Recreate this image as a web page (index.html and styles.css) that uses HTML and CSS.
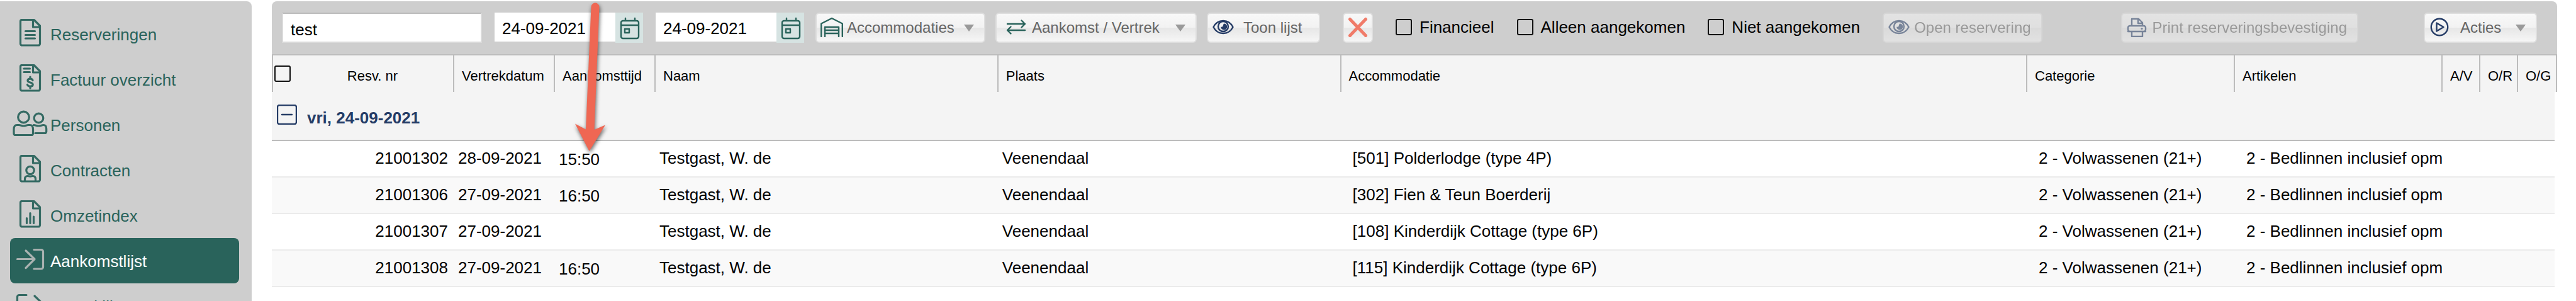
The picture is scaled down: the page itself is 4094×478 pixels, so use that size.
FILE: index.html
```html
<!DOCTYPE html>
<html lang="nl">
<head>
<meta charset="utf-8">
<title>Aankomstlijst</title>
<meta name="viewport" content="width=device-width, initial-scale=1">
<link rel="stylesheet" href="styles.css">
</head>
<body>
<svg class="defs" aria-hidden="true">
  <symbol id="file" viewBox="0 0 56 44">
    <path d="M14 1.500H34L43.500 11V39.500a2.500 2.500 0 0 1-2.500 2.500H15a2.500 2.500 0 0 1-2.500-2.500V4a2.500 2.500 0 0 1 2.500-2.500zM32.500 2V13H43"/>
  </symbol>
  <symbol id="eye" viewBox="0 0 36 32">
    <path d="M2.500 16C6 9 12 6 18 6s12 3 15.500 10C30 23 24 26 18 26S6 23 2.500 16z"/>
    <circle cx="18" cy="15" r="8"/>
    <path class="solid" d="M19 10.500a5 5 0 1 1-4.800 5c1.800.8 4-.2 3.600-2.500z"/>
  </symbol>
  <symbol id="calendar" viewBox="0 0 44 48">
    <path d="M9 16a3 3 0 0 1 3-3H34a3 3 0 0 1 3 3V38a3 3 0 0 1-3 3H12a3 3 0 0 1-3-3zM9 20H37M16 9v4M31 9v4M15 26h7v6h-7z"/>
  </symbol>
</svg>

<div class="app">
  <nav class="sidebar" aria-label="Hoofdmenu">
    <a class="nav-item" href="#reserveringen">
      <svg class="nav-icon" viewBox="0 0 56 44"><use href="#file"/><path d="M20.500 19.500H35.500M20.500 25.500H35.500M20.500 31H35.500"/></svg>
      <span>Reserveringen</span>
    </a>
    <a class="nav-item" href="#factuur">
      <svg class="nav-icon" viewBox="0 0 56 44"><use href="#file"/><path d="M18 7H27.500M18 12.500H27.500"/><path d="M32 25.500c-.8-1.800-2.300-2.400-4-2.400-2.300 0-4 1.100-4 2.900 0 4 8.200 2 8.200 6.200 0 2-1.900 3-4.200 3-2.200 0-3.800-.9-4.500-2.700M28 20v3M28 35v3"/></svg>
      <span>Factuur overzicht</span>
    </a>
    <a class="nav-item" href="#personen">
      <svg class="nav-icon" viewBox="0 0 56 44"><circle cx="17.500" cy="12" r="8.800"/><circle cx="41.500" cy="13.500" r="7.300"/><path d="M7 24.500h3c3 0 4 1.500 7.500 1.500s4.500-1.500 7.500-1.500h2.500c4 0 5 3.500 5 7V38a2.500 2.500 0 0 1-2.500 2.500H4.500A2.500 2.500 0 0 1 2 38V31.500c0-3.500 1-7 5-7zM33.500 24.500c3 0 4 1.500 8 1.500s4.500-1.500 7.500-1.500c3.500 0 4.700 3 4.700 6V35a2.500 2.500 0 0 1-2.500 2.500H36"/></svg>
      <span>Personen</span>
    </a>
    <a class="nav-item" href="#contracten">
      <svg class="nav-icon" viewBox="0 0 56 44"><use href="#file"/><circle cx="28" cy="24.500" r="6.200"/><path d="M19.500 41V38.500c0-3 1.500-5 4.500-5 1.500 0 2 .7 4 .7s2.500-.7 4-.7c3 0 4.500 2 4.500 5V41"/></svg>
      <span>Contracten</span>
    </a>
    <a class="nav-item" href="#omzetindex">
      <svg class="nav-icon" viewBox="0 0 56 44"><use href="#file"/><path d="M22.500 28.500v8M28 20.500v16M33.500 26v10.500"/></svg>
      <span>Omzetindex</span>
    </a>
    <a class="nav-item active" href="#aankomstlijst" aria-current="page">
      <svg class="nav-icon" viewBox="0 0 56 44"><path d="M7.500 21.500H35M21 8l14 13.500L21 35.500M34 6.500H45.500a3 3 0 0 1 3 3v24.500a3 3 0 0 1-3 3H34"/></svg>
      <span>Aankomstlijst</span>
    </a>
    <a class="nav-item" href="#vertreklijst">
      <svg class="nav-icon" viewBox="0 0 56 44"><path d="M22 6.500H10.500a3 3 0 0 0-3 3v24.500a3 3 0 0 0 3 3H22M20 21.500H49M35 8l14 13.500L35 35.500"/></svg>
      <span>Vertreklijst</span>
    </a>
  </nav>

  <main class="content">
    <form class="toolbar">
      <div class="fields">
        <input class="search" type="text" value="test" aria-label="Zoeken">
        <div class="date">
          <input type="text" value="24-09-2021" aria-label="Datum van">
          <button type="button" aria-label="Kies datum van"><svg viewBox="0 0 44 48"><use href="#calendar"/></svg></button>
        </div>
        <div class="date">
          <input type="text" value="24-09-2021" aria-label="Datum tot">
          <button type="button" aria-label="Kies datum tot"><svg viewBox="0 0 44 48"><use href="#calendar"/></svg></button>
        </div>
      </div>
      <div class="actions">
        <button class="btn width-m" type="button">
          <svg class="green" viewBox="0 0 36 32"><path d="M1.200 31V10.500L18 2l16.800 8.500V31M7 31V16H29V31M7 21H29M7 26H29"/></svg>
          <span>Accommodaties</span><i class="caret"></i>
        </button>
        <button class="btn width-l indent" type="button">
          <svg class="green" viewBox="0 0 36 32"><path d="M3 11H31M25.500 5.500L31 11l-5.500 5.500M31 21H3M8.500 15.500L3 21l5.500 5.500"/></svg>
          <span>Aankomst / Vertrek</span><i class="caret"></i>
        </button>
        <button class="btn width-s wide-gap" type="button">
          <svg viewBox="0 0 36 32"><use href="#eye"/></svg>
          <span>Toon lijst</span>
        </button>
      </div>
      <button class="btn clear" type="button" aria-label="Wissen">
        <svg viewBox="0 0 36 32"><path d="M5.500 3.500L30.500 29.500M30.500 3.500L5.500 29.500"/></svg>
      </button>
      <div class="checks">
        <label><input type="checkbox">Financieel</label>
        <label><input type="checkbox">Alleen aangekomen</label>
        <label><input type="checkbox">Niet aangekomen</label>
      </div>
      <button class="btn" type="button" disabled>
        <svg viewBox="0 0 36 32"><use href="#eye"/></svg>
        <span>Open reservering</span>
      </button>
      <div class="trailing">
        <button class="btn" type="button" disabled>
          <svg viewBox="0 0 36 32"><path d="M9 14V3H20l6 6V14M19 3v7H26M8 23H6a3 3 0 0 1-3-3V17a3 3 0 0 1 3-3H28a3 3 0 0 1 3 3V20a3 3 0 0 1-3 3H26M3 23H31M9 23v8H26V23"/><circle class="solid" cx="25" cy="18.500" r="1.600"/></svg>
          <span>Print reserveringsbevestiging</span>
        </button>
        <button class="btn width-s wide-gap" type="button">
          <svg viewBox="0 0 36 32"><circle cx="17" cy="16" r="13.200"/><path d="M12.500 9.500V22.500L23.500 16z"/></svg>
          <span>Acties</span><i class="caret"></i>
        </button>
      </div>
    </form>

    <table class="grid">
      <colgroup>
        <col class="c-check"><col class="c-nr"><col class="c-date"><col class="c-date"><col class="c-name"><col class="c-name"><col><col class="c-cat"><col class="c-cat"><col class="c-flag"><col class="c-flag"><col class="c-flag"><col class="c-edge">
      </colgroup>
      <thead>
        <tr>
          <th class="check"><input type="checkbox" aria-label="Alles selecteren"></th>
          <th class="plain">Resv. nr</th>
          <th>Vertrekdatum</th><th>Aankomsttijd</th><th>Naam</th><th>Plaats</th><th>Accommodatie</th><th>Categorie</th><th>Artikelen</th><th>A/V</th><th>O/R</th><th class="last" colspan="2">O/G</th>
        </tr>
      </thead>
      <tbody>
        <tr class="group">
          <td colspan="12">
            <button type="button" aria-expanded="true">
              <svg viewBox="0 0 32 32"><rect x="1" y="1" width="30" height="30" rx="3"/><path d="M8 16H24"/></svg>
              <span>vri, 24-09-2021</span>
            </button>
          </td>
        </tr>
        <tr><td></td><td class="nr">21001302</td><td>28-09-2021</td><td class="time">15:50</td><td>Testgast, W. de</td><td>Veenendaal</td><td class="list">[501] Polderlodge (type 4P)</td><td class="list">2 - Volwassenen (21+)</td><td class="list">2 - Bedlinnen inclusief opm</td><td></td><td></td><td></td></tr>
        <tr><td></td><td class="nr">21001306</td><td>27-09-2021</td><td class="time">16:50</td><td>Testgast, W. de</td><td>Veenendaal</td><td class="list">[302] Fien &amp; Teun Boerderij</td><td class="list">2 - Volwassenen (21+)</td><td class="list">2 - Bedlinnen inclusief opm</td><td></td><td></td><td></td></tr>
        <tr><td></td><td class="nr">21001307</td><td>27-09-2021</td><td class="time"></td><td>Testgast, W. de</td><td>Veenendaal</td><td class="list">[108] Kinderdijk Cottage (type 6P)</td><td class="list">2 - Volwassenen (21+)</td><td class="list">2 - Bedlinnen inclusief opm</td><td></td><td></td><td></td></tr>
        <tr><td></td><td class="nr">21001308</td><td>27-09-2021</td><td class="time">16:50</td><td>Testgast, W. de</td><td>Veenendaal</td><td class="list">[115] Kinderdijk Cottage (type 6P)</td><td class="list">2 - Volwassenen (21+)</td><td class="list">2 - Bedlinnen inclusief opm</td><td></td><td></td><td></td></tr>
      </tbody>
    </table>

    <svg class="pointer" viewBox="0 0 60 250" aria-hidden="true"><path d="M29.500 11a6.500 6.500 0 0 1 13 0L34.500 206 52 198.500 26.500 240 4 196.500 21 205.500z"/></svg>
  </main>
</div>
</body>
</html>
```
FILE: styles.css
```css
* {
  box-sizing: border-box;
}

body {
  margin: 0;
  background: #fff;
  color: #000;
  font: 26px "Liberation Sans", Arial, sans-serif;
}

button,
input {
  margin: 0;
  font: inherit;
  color: inherit;
}

svg {
  flex: none;
  fill: none;
  stroke: currentColor;
  stroke-width: 2.4;
  stroke-linecap: round;
  stroke-linejoin: round;
}

.solid {
  fill: currentColor;
  stroke: none;
}

.defs {
  position: absolute;
  width: 0;
  height: 0;
}

.app {
  display: flex;
  gap: 32px;
  height: 100vh;
  padding: 2px 30px 0 0;
  overflow: hidden;
}

/* Sidebar */
.sidebar {
  flex: none;
  width: 400px;
  padding: 16px 20px 0 16px;
  overflow: hidden;
  background: #cecece;
  border-top-right-radius: 8px;
}

.nav-item {
  display: flex;
  align-items: flex-start;
  gap: 4px;
  height: 72px;
  padding: 12px 4px 0;
  border-radius: 8px;
  color: #29635b;
  line-height: 50px;
  text-decoration: none;
}

.nav-icon {
  width: 56px;
  height: 44px;
  stroke-width: 3.2;
  opacity: 0.93;
}

.nav-item.active {
  background: #29635b;
  color: #fff;
}

.active .nav-icon {
  color: #b4b9b8;
}

/* Toolbar */
.content {
  position: relative;
  flex: 1;
  min-width: 0;
}

.toolbar {
  display: flex;
  align-items: flex-start;
  gap: 36px;
  padding: 18px 32px 18px 16px;
  background: #cecece;
  border-bottom: 2px solid #bcbcbc;
  border-radius: 8px 8px 0 0;
}

.fields {
  display: flex;
  gap: 20px;
  margin-right: -18px;
}

.search {
  width: 318px;
  height: 48px;
  padding: 6px 12px 0;
  border: 2px solid #dadada;
  border-top-color: #bbb;
  background: #fff;
}

.date {
  display: flex;
  align-items: flex-start;
}

.date input {
  width: 192px;
  height: 46px;
  padding: 4px 12px 0;
  border: 0;
  background: #fff;
}

.date button {
  width: 44px;
  height: 48px;
  padding: 0;
  border: 0;
  background: #d6e3e2;
  color: #29635b;
}

.date svg {
  display: block;
  width: 44px;
  height: 48px;
}

.actions {
  display: flex;
  gap: 16px;
}

.btn {
  display: flex;
  flex: none;
  align-items: center;
  gap: 6px;
  height: 48px;
  padding: 0 16px 0 6px;
  border: 2px solid #dedede;
  border-radius: 6px;
  background: linear-gradient(#f8f8f8, #f2f2f2 50%, #e6e6e6 50%, #f6f6f6);
  color: #666;
  font-size: 24px;
  white-space: nowrap;
}

.btn svg {
  width: 36px;
  height: 32px;
  margin-bottom: 2px;
  color: #253c66;
}

.btn .green {
  color: #29635b;
}

.btn:disabled {
  opacity: 0.5;
}

.width-s {
  min-width: 180px;
}

.width-m {
  min-width: 270px;
}

.width-l {
  min-width: 320px;
}

.wide-gap {
  gap: 14px;
}

.indent {
  padding-left: 14px;
}

.btn.clear {
  padding: 0 4px;
}

.btn.clear svg {
  color: #f07b69;
  stroke-width: 5;
}

.caret {
  margin-left: auto;
  border: 8px solid transparent;
  border-top: 11px solid #999;
  border-bottom: 0;
}

.checks {
  display: flex;
  gap: 36px;
  white-space: nowrap;
}

.checks label {
  display: flex;
  align-items: center;
  gap: 12px;
  height: 46px;
}

input[type="checkbox"] {
  appearance: none;
  flex: none;
  width: 26px;
  height: 26px;
  border: 2px solid #111;
  border-radius: 3px;
}

.trailing {
  display: flex;
  gap: 104px;
  margin-left: auto;
}

/* Arrivals table */
.grid {
  width: 100%;
  table-layout: fixed;
  border-spacing: 0;
}

.c-check {
  width: 32px;
}

.c-nr {
  width: 256px;
}

.c-date {
  width: 160px;
}

.c-name {
  width: 15%;
}

.c-cat {
  width: 330px;
}

.c-flag {
  width: 60px;
}

.c-edge {
  width: 4px;
}

.grid th {
  height: 58px;
  padding: 8px 0 0 12px;
  border-left: 2px solid #bcbcbc;
  background: #f4f4f4;
  font-size: 22px;
  font-weight: normal;
  text-align: left;
  white-space: nowrap;
}

.grid .check {
  padding: 0 0 0 2px;
}

.check input {
  display: block;
}

.grid .plain {
  padding-left: 0;
  border-left: 0;
  text-align: center;
}

.grid .last {
  border-right: 2px solid #bcbcbc;
}

.grid td {
  height: 58px;
  padding: 0 0 2px 8px;
  border-bottom: 2px solid #ebebeb;
  white-space: nowrap;
}

.grid tr:nth-child(odd) td {
  background: #f9f9f9;
}

.grid .nr {
  padding-right: 8px;
  text-align: right;
}

.grid .time {
  padding-top: 4px;
}

.grid .list {
  padding-left: 20px;
}

.grid tr.group td {
  height: 78px;
  padding: 20px 8px 0;
  border-color: #bcbcbc;
  background: #f4f4f4;
  vertical-align: top;
}

.group button {
  display: flex;
  align-items: flex-start;
  gap: 16px;
  padding: 0;
  border: 0;
  background: none;
  color: #253c66;
  font-weight: bold;
  line-height: 42px;
}

.group svg {
  width: 32px;
  height: 32px;
}

/* Annotation arrow over the arrival time column */
.pointer {
  position: absolute;
  top: -2px;
  left: 478px;
  width: 60px;
  height: 250px;
  fill: #ef6753;
  stroke: none;
  pointer-events: none;
  filter: drop-shadow(1px 3px 3px rgba(0, 0, 0, 0.6));
}
```
